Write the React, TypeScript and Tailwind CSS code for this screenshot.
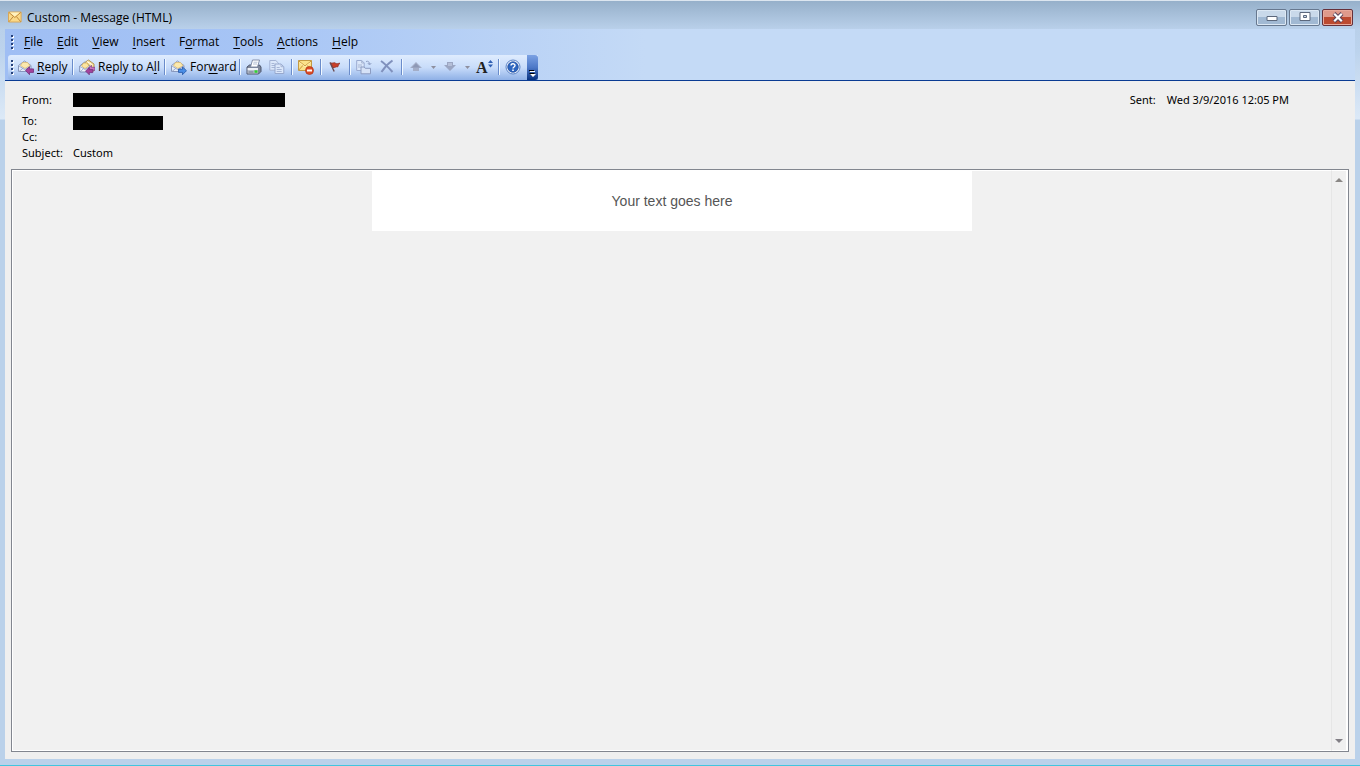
import type { ReactNode } from "react";

const menus: [string, string, string][] = [
  ["", "F", "ile"],
  ["", "E", "dit"],
  ["", "V", "iew"],
  ["", "I", "nsert"],
  ["F", "o", "rmat"],
  ["", "T", "ools"],
  ["", "A", "ctions"],
  ["", "H", "elp"],
];

function Icon({ children }: { children: ReactNode }) {
  return (
    <svg width="16" height="16" viewBox="0 0 16 16" aria-hidden="true" className="shrink-0">
      {children}
    </svg>
  );
}

function Envelope() {
  return (
    <>
      <path d="M.5 6.5 6.5 2l6.500 4.500v6H.5z" fill="#e4edfa" stroke="#8797bd" />
      <path d="M2.500 6.500 4.500 3.500h5L12 6.500 7 9.500z" fill="#fbe9ae" stroke="#d9b565" strokeWidth=".7" />
      <path d="m1 7 5.800 3.600L13 7M1 12.500l4-3.300M13 12.500 9 9.300" fill="none" stroke="#93a4c9" strokeWidth=".9" />
    </>
  );
}

function ReplyIcon() {
  return (
    <Icon>
      <Envelope />
      <path d="m7.500 11.500 4-3.800v2.200h4v3.500h-4v2.300z" fill="#a5439c" stroke="#71317d" strokeWidth=".8" />
    </Icon>
  );
}

function ReplyAllIcon() {
  return (
    <Icon>
      <path d="m5 4 4.500-3L15 5v7H9z" fill="#f8df91" stroke="#a98b52" strokeWidth=".9" />
      <path d="M8 2.500 13.500 6" stroke="#fff" />
      <path d="M.7 7 5.500 3.200 11 7v6H.7z" fill="#eef4fc" stroke="#7d8fb8" />
      <path d="m2.500 7 2-3h3.800l1.500 3L6 9.600z" fill="#fbe6a2" stroke="#d2a94c" strokeWidth=".7" />
      <path d="m1 7.500 5 3 5-3M1 13l3.500-3.300" fill="none" stroke="#8c9fc6" strokeWidth=".8" />
      <path d="m9 9.500 3.500-3.200v2H16v3h-3.500v2z" fill="#c475be" stroke="#7d3b8a" strokeWidth=".7" />
      <path d="m6.500 12 3.800-3.400v2h3.500v3h-3.500v2.200z" fill="#a5439c" stroke="#71317d" strokeWidth=".8" />
    </Icon>
  );
}

function ForwardIcon() {
  return (
    <Icon>
      <Envelope />
      <path d="m15.500 11.700-4-3.800v2.200h-4v3.300h4v2.300z" fill="#4a8ee6" stroke="#2355a5" strokeWidth=".8" />
    </Icon>
  );
}

function PrintIcon() {
  return (
    <Icon>
      <path d="M1 8 3.500 6h10L15 8v4.500L12.500 15H1z" fill="#7f8799" stroke="#4c566e" />
      <path d="m4.500 8 2-7h7L11.500 8z" fill="#fff" stroke="#7b86a1" strokeWidth=".9" />
      <path d="M7.500 3.200h4M7 5h4" stroke="#b5c0d6" />
      <path d="M1.500 9H12v2H1.500z" fill="#eef1f6" />
      <path d="M1.500 11H12v3.500H1.500z" fill="#bcc3d1" />
      <path d="M2.500 13h5" stroke="#6b7489" />
      <path d="M8.500 11.300h3v2.500h-3z" fill="#2fd12f" />
    </Icon>
  );
}

function CopyIcon() {
  return (
    <Icon>
      <path d="M.8 1.500h6l2.700 2.700v7H.8z" fill="#dbe7fa" stroke="#a3b2d4" />
      <path d="M2.500 4.500h3M2.500 6.500h4M2.500 8.500h4" stroke="#a8b7d7" />
      <path d="M6 5h6l2.800 2.700v6.800H6z" fill="#dbe7fa" stroke="#97a8cd" />
      <path d="M12 5v2.700h2.800M7.700 8.500h3M7.700 10.500h5M7.700 12.500h5" fill="none" stroke="#a6b5d6" />
    </Icon>
  );
}

function BlockIcon() {
  return (
    <Icon>
      <path d="M.5 1.500h13v10H.5z" fill="#fbe18a" stroke="#c39a45" />
      <path d="m.8 2 6.200 5L13.200 2M.8 11l4.500-5M13.200 11 8.700 6" fill="none" stroke="#c9963a" />
      <path d="m1.500 3.500 5.500 4.300 5.500-4.300" fill="none" stroke="#fff4c3" strokeWidth=".8" />
      <circle cx="11.500" cy="11.500" r="4" fill="#dd4a26" stroke="#a93518" strokeWidth=".7" />
      <path d="M9 10.500h5v2H9z" fill="#fff" />
    </Icon>
  );
}

function FlagIcon() {
  return (
    <Icon>
      <path d="M3.500 3.800c2 1.200 3.500-1 5 .4 1.500 1 3 0 4.500 0-1.400 1-1.800 2.400-2.200 3.700-1.800-.6-2.900 1-5 .6z" fill="#c9402a" stroke="#8f2d22" strokeWidth=".8" />
      <path d="m3 3.500 4.200 9" stroke="#6b4a50" strokeWidth="1.400" />
    </Icon>
  );
}

function MoveIcon() {
  return (
    <Icon>
      <path d="M.7 1.500h5L8.200 4v7.500H.7z" fill="#dbe7fa" stroke="#9aabd0" />
      <path d="M5.700 1.500V4h2.500M2 6h4M2 8h4" fill="none" stroke="#a7b5d3" />
      <path d="M5 8h3.200l1 1.300h5.300v5.500H5z" fill="#d6e2f7" stroke="#8c9cc1" />
      <path d="M10 2.500c2.500-.8 3.500.5 3.500 3M11.800 4l1.700 2 1.800-2" fill="none" stroke="#91a1c6" />
    </Icon>
  );
}

function DeleteIcon() {
  return (
    <Icon>
      <path d="M2 2c3 2 7.500 6.500 11.500 11M13.500 1.500C9 4.500 5 9 2.500 13" fill="none" stroke="#8091bd" strokeWidth="2" />
    </Icon>
  );
}

function UpIcon() {
  return (
    <Icon>
      <path d="M8 3 2 9h3v3h6V9h3z" fill="#a3adc7" />
      <path d="M8 4.500 4 8.500h8z" fill="#8d98b5" />
    </Icon>
  );
}

function DownIcon() {
  return (
    <Icon>
      <path d="m8 12 6-6h-3V3H5v3H2z" fill="#9ba6c2" />
      <path d="M6 4h4v3H6z" fill="#b5bfd8" />
    </Icon>
  );
}

function HelpIcon() {
  return (
    <Icon>
      <circle cx="8" cy="8" r="7" fill="#f0f6ff" stroke="#5b83c6" />
      <circle cx="8" cy="8" r="5.300" fill="#2d65bf" stroke="#1f4b9a" strokeWidth=".7" />
      <path d="M6 6.600C6 4.200 10 4.200 10 6.500 10 8 8 8 8 9.500" fill="none" stroke="#fff" strokeWidth="1.400" />
      <path d="M7.200 10.600h1.600v1.500H7.200z" fill="#fff" />
    </Icon>
  );
}

function Separator() {
  return (
    <span className="flex h-5 w-[6px] shrink-0 justify-center py-[2px]" aria-hidden="true">
      <span className="w-px bg-[#6a8ccb]" />
      <span className="w-px bg-[#f1f9ff]" />
    </span>
  );
}

function Grip() {
  return (
    <svg width="3" height="15" viewBox="0 0 3 15" aria-hidden="true" className="shrink-0">
      {[0, 4, 8, 12].map((y) => (
        <g key={y}>
          <path d={`M1 ${y + 1}h2v2H1z`} fill="#fff" />
          <path d={`M0 ${y}h2v2H0z`} fill="#27417a" />
        </g>
      ))}
    </svg>
  );
}

function Tool({ label, children }: { label: string; children: ReactNode }) {
  return (
    <button type="button" aria-label={label} className="flex h-6 w-[23px] shrink-0 items-center px-[3px]">
      {children}
    </button>
  );
}

function Drop({ label }: { label: string }) {
  return (
    <button type="button" aria-label={label} className="flex h-6 w-[11px] shrink-0 items-center justify-center">
      <svg width="5" height="3" viewBox="0 0 5 3" aria-hidden="true">
        <path d="M0 0h5L2.500 3z" fill="#8e8f9e" />
      </svg>
    </button>
  );
}

const textTool = "flex h-6 shrink-0 items-center gap-[3px] pl-[3px] whitespace-nowrap";
const caption = "flex h-[17px] w-[31px] items-center justify-center rounded-[2px] border";
const glass =
  "border-[#67788f] bg-linear-to-b from-[#c9d9ea] from-50% to-[#a1b9d3] to-50% shadow-[inset_0_0_0_1px_#dce8f4]";

export default function App() {
  return (
    <div className="flex h-screen flex-col overflow-hidden border-t border-b border-t-[#dce6f0] border-b-[#42c5de] bg-[linear-gradient(to_bottom,#96b0ca_0px,#b9d0ea_28px,#bcd3ed_50px,#dce9f7_118px,#bad1ea_119px,#bad1ea_100%)] font-['Open_Sans',sans-serif] text-xs text-black">
      <header className="flex h-7 shrink-0 items-center pt-1 pr-[7px] pl-2">
        <svg width="14" height="12" viewBox="0 0 14 12" aria-hidden="true">
          <path d="M.5 1h12.600v10H.5z" fill="#fbd987" stroke="#d9a85a" />
          <path d="m1 1.500 5.800 5L12.700 1.500M1 10.700l4.300-5.200M12.700 10.700 8.400 5.500" fill="none" stroke="#c08a3e" />
          <path d="m2 1.500 4.800 4 4.800-4z" fill="#fff2c0" />
        </svg>
        <h1 className="ml-[5px] pt-px">Custom - Message (HTML)</h1>
        <div className="ml-auto flex gap-[2px]">
          <button type="button" aria-label="Minimize" className={`${caption} ${glass}`}>
            <svg width="12" height="5" viewBox="0 0 12 5" aria-hidden="true" className="mt-[3px]">
              <path d="M1 .5h10v4H1z" fill="#fff" stroke="#5c687c" />
            </svg>
          </button>
          <button type="button" aria-label="Restore" className={`${caption} ${glass}`}>
            <svg width="12" height="10" viewBox="0 0 12 10" aria-hidden="true">
              <path fillRule="evenodd" d="M1 .5h10v8H1zM4.500 3.500v2h3v-2z" fill="#fff" stroke="#5c687c" />
            </svg>
          </button>
          <button
            type="button"
            aria-label="Close"
            className={`${caption} border-[#66303a] bg-linear-to-b from-[#df9a8b] from-50% to-[#bc4a30] to-50% shadow-[inset_0_0_0_1px_#e8aa9c]`}
          >
            <svg width="14" height="11" viewBox="0 0 14 11" aria-hidden="true">
              <path d="m3 1.500 8 8M11 1.500l-8 8" stroke="#59445a" strokeWidth="4" />
              <path d="m3.200 1.700 7.600 7.600M10.800 1.700 3.200 9.300" stroke="#fff" strokeWidth="2.200" />
            </svg>
          </button>
        </div>
      </header>

      <div className="mx-[5px] mb-[6px] flex min-h-0 grow flex-col bg-[#efefef]">
        <div className="shrink-0 border-b border-[#0a3b93] bg-[linear-gradient(to_right,#9fbef4_0px,#a6c4f5_240px,#c4daf6_640px)]">
          <nav aria-label="Menu bar" className="flex h-[26px] items-center pl-[6px]">
            <Grip />
            <div className="flex gap-[14px] pl-[10px]">
              {menus.map(([before, key, after]) => (
                <button key={key + after} type="button">
                  {before}
                  <u className="underline-offset-2">{key}</u>
                  {after}
                </button>
              ))}
            </div>
          </nav>
          <div
            role="toolbar"
            aria-label="Message tools"
            className="ml-[3px] flex h-[25px] w-fit rounded-l-[3px] bg-linear-to-b from-[#dfecfe] via-[#c8dcfa] to-[#8fb0e6]"
          >
            <div className="flex items-center pr-[2px] pb-px pl-[3px]">
              <Grip />
              <button type="button" className={`${textTool} ml-px w-[55px]`}>
                <ReplyIcon />
                <span><u className="underline-offset-2">R</u>eply</span>
              </button>
              <Separator />
              <button type="button" className={`${textTool} w-[86px]`}>
                <ReplyAllIcon />
                <span>Reply to A<u className="underline-offset-2">l</u>l</span>
              </button>
              <Separator />
              <button type="button" className={`${textTool} w-[69px]`}>
                <ForwardIcon />
                <span>For<u className="underline-offset-2">w</u>ard</span>
              </button>
              <Separator />
              <Tool label="Print"><PrintIcon /></Tool>
              <Tool label="Copy"><CopyIcon /></Tool>
              <Separator />
              <Tool label="Block sender"><BlockIcon /></Tool>
              <Separator />
              <Tool label="Follow up"><FlagIcon /></Tool>
              <Separator />
              <Tool label="Move to folder"><MoveIcon /></Tool>
              <Tool label="Delete"><DeleteIcon /></Tool>
              <Separator />
              <Tool label="Previous item"><UpIcon /></Tool>
              <Drop label="Previous item options" />
              <Tool label="Next item"><DownIcon /></Tool>
              <Drop label="Next item options" />
              <Tool label="Font size">
                <span className="pt-[2px] font-['Liberation_Serif',serif] text-base leading-none font-bold text-[#222]">A</span>
                <svg width="5" height="16" viewBox="0 0 5 16" aria-hidden="true" className="shrink-0">
                  <path d="M2.500 1 5 4H0zM2.500 8.500 5 5.500H0z" fill="#2f5fb3" />
                </svg>
              </Tool>
              <Separator />
              <Tool label="Help"><HelpIcon /></Tool>
            </div>
            <button
              type="button"
              aria-label="Toolbar options"
              className="flex w-[11px] items-end justify-center rounded-r-[3px] bg-linear-to-b from-[#7ba1e3] via-[#4d78c7] to-[#06317f] pb-[2px]"
            >
              <svg width="7" height="8" viewBox="0 0 7 8" aria-hidden="true">
                <path d="M0 0h5v1H0zM0 3h6L3 6z" fill="#000" />
                <path d="M1 1h5v1H1zM1 4h6L4 7z" fill="#fff" />
              </svg>
            </button>
          </div>
        </div>

        <section
          aria-label="Message header"
          className="flex shrink-0 justify-between pt-[11px] pr-[66px] pb-2 pl-[17px] font-['Noto_Sans',sans-serif] text-[11px] leading-4"
        >
          <dl className="grid grid-cols-[51px_auto] grid-rows-[21px_16px_16px_16px]">
            <dt>From:</dt>
            <dd className="mt-px h-[14px] w-[212px] bg-black" />
            <dt>To:</dt>
            <dd className="mt-[3px] h-[14px] w-[90px] bg-black" />
            <dt>Cc:</dt>
            <dd />
            <dt>Subject:</dt>
            <dd>Custom</dd>
          </dl>
          <dl className="flex gap-[11px]">
            <dt>Sent:</dt>
            <dd>Wed 3/9/2016 12:05 PM</dd>
          </dl>
        </section>

        <main className="mx-[6px] mb-[7px] flex min-h-0 grow border border-[#82868f] bg-[#f1f1f1]">
          <div className="grow border-t border-b border-l border-white">
            <div className="mx-auto flex h-[60px] w-[600px] max-w-full items-center justify-center bg-white font-['Liberation_Sans',Arial,sans-serif] text-sm text-[#555]">
              <p>Your text goes here</p>
            </div>
          </div>
          <div className="flex w-[17px] shrink-0 flex-col justify-between border border-r-2 border-white border-l-[#e6e6e6] bg-[#f0f0f0] py-[5px]">
            <button type="button" aria-label="Scroll up" className="flex h-2 items-center justify-center">
              <svg width="8" height="4" viewBox="0 0 8 4" aria-hidden="true">
                <path d="M4 0 8 4H0z" fill="#8a8785" />
              </svg>
            </button>
            <button type="button" aria-label="Scroll down" className="flex h-2 items-center justify-center">
              <svg width="8" height="4" viewBox="0 0 8 4" aria-hidden="true">
                <path d="M0 0h8L4 4z" fill="#827f85" />
              </svg>
            </button>
          </div>
        </main>
      </div>
    </div>
  );
}
